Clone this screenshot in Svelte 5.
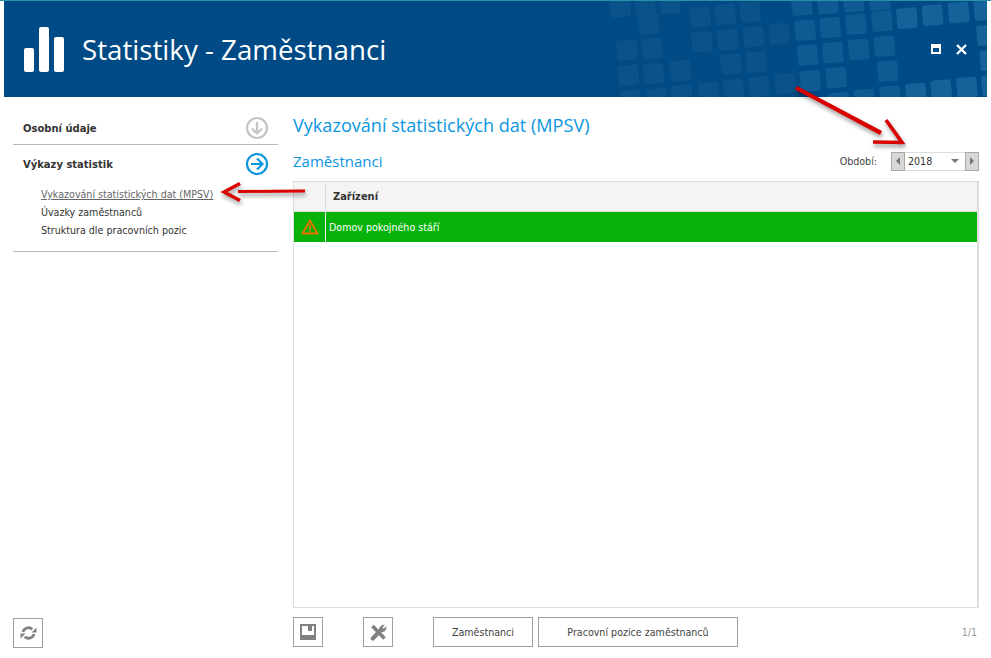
<script>
  const faint = [[115,40],[50,120],[125,115],[55,195],[130,190],[210,182],[270,20],[345,12],[420,5],[275,95],[352,88],[430,80],[507,70],[362,162],[438,155],[295,247],[370,238],[447,230],[525,220],[140,265],[215,255],[60,270],[30,-10],[105,-15],[180,-20]];
  const mid = [[585,60],[660,52],[737,42],[815,33],[592,135],[668,127],[745,118],[823,108],[600,212],[678,202],[832,183],[575,-15],[652,-20],[730,-25],[808,-30],[685,278],[762,268],[840,258]];
  const bright = [[890,24],[967,15],[1045,7],[1122,0],[1130,75],[1140,150],[917,250],[993,240],[1070,232],[1145,225]];
  const tile = (l) => l.map(([x, y]) => ({ x: x / 3 + 600 - 4, y: y / 3 - 1 }));
  const groups = [
    { cls: 'faint', items: tile(faint) },
    { cls: 'mid', items: tile(mid) },
    { cls: 'bright', items: tile(bright) }
  ];
</script>

<div class="page">
  <header class="head">
    <svg class="pattern" width="983" height="96" viewBox="0 0 983 96" aria-hidden="true">
      {#each groups as g}
        {#each g.items as t}
          <rect class={g.cls} x={t.x} y={t.y} width="20.5" height="20.5" rx="2.5" transform="rotate(-5 {t.x + 10} {t.y + 10})" />
        {/each}
      {/each}
    </svg>
    <svg class="logo" width="40" height="45" viewBox="0 0 40 45" aria-hidden="true">
      <rect x="0" y="21" width="10" height="24" rx="2" />
      <rect x="15" y="0" width="10" height="45" rx="2" />
      <rect x="30" y="10" width="10" height="35" rx="2" />
    </svg>
    <h1>Statistiky - Zaměstnanci</h1>
    <div class="winbtns">
      <svg width="10" height="10" viewBox="0 0 10 10" aria-hidden="true"><path fill-rule="evenodd" d="M0 0H10V10H0ZM2 4V8H8V4Z" /></svg>
      <svg width="11" height="11" viewBox="0 0 11 11" aria-hidden="true"><path d="M1 1L10 10M10 1L1 10" stroke="#fff" stroke-width="2.4" /></svg>
    </div>
  </header>

  <div class="body">
    <aside class="side">
      <div class="sect first">
        <span class="sect-title">Osobní údaje</span>
        <svg class="circ" width="24" height="24" viewBox="0 0 24 24" aria-hidden="true">
          <circle cx="12" cy="12" r="10" fill="none" stroke="#c4c4c4" stroke-width="2.2" />
          <path d="M12 6V17M7 12.500L12 17.500L17 12.500" fill="none" stroke="#c4c4c4" stroke-width="2.200" />
        </svg>
      </div>
      <div class="sect second">
        <span class="sect-title">Výkazy statistik</span>
        <svg class="circ" width="24" height="24" viewBox="0 0 24 24" aria-hidden="true">
          <circle cx="12" cy="12" r="10" fill="none" stroke="#0b96e0" stroke-width="2.2" />
          <path d="M6 12H17.500M12 6.500L17.500 12L12 17.500" fill="none" stroke="#0b96e0" stroke-width="2.200" />
        </svg>
      </div>
      <ul class="links">
        <li class="active">Vykazování statistických dat (MPSV)</li>
        <li>Úvazky zaměstnanců</li>
        <li>Struktura dle pracovních pozic</li>
      </ul>
    </aside>

    <main class="main">
      <h2>Vykazování statistických dat (MPSV)</h2>
      <div class="subrow">
        <h3>Zaměstnanci</h3>
        <div class="period">
          <span class="plabel">Období:</span>
          <span class="step"><i class="tri left"></i></span>
          <span class="year">2018<i class="tri down"></i></span>
          <span class="step"><i class="tri right"></i></span>
        </div>
      </div>
      <div class="table">
        <div class="thead">
          <div class="c0"></div>
          <div class="c1">Zařízení</div>
        </div>
        <div class="trow">
          <div class="c0">
            <svg width="18" height="16" viewBox="0 0 18 16" aria-hidden="true">
              <path d="M9 1.500L16.500 14.500H1.500Z" fill="none" stroke="#f07000" stroke-width="1.800" stroke-linejoin="round" />
              <path d="M9 5.500V10.500M9 11.500V13" stroke="#f07000" stroke-width="1.800" />
            </svg>
          </div>
          <div class="c1">Domov pokojného stáří</div>
        </div>
      </div>
    </main>
  </div>

  <footer class="foot">
    <div class="foot-left">
      <button class="icon" aria-label="Obnovit">
        <svg width="17" height="16" viewBox="0 0 17 16" aria-hidden="true">
          <path d="M3 7A5.700 5.700 0 0 1 12.300 4.200" fill="none" stroke="#808080" stroke-width="2.800" />
          <path d="M14 9A5.700 5.700 0 0 1 4.700 11.800" fill="none" stroke="#808080" stroke-width="2.800" />
          <path d="M16.500 2.500V7.500H11.500Z M.5 13.500V8.500H5.500Z" fill="#808080" />
        </svg>
      </button>
    </div>
    <div class="foot-main">
      <button class="icon save" aria-label="Uložit">
        <svg width="16" height="16" viewBox="0 0 16 16" aria-hidden="true">
          <path fill="#808080" fill-rule="evenodd" d="M0 0H16V16H0ZM2 2V11H14V2H12V7H8V2Z" />
        </svg>
      </button>
      <button class="icon tools" aria-label="Nástroje">
        <svg width="17" height="17" viewBox="0 0 17 17" aria-hidden="true">
          <path d="M2.500 2L14.500 14.500" stroke="#808080" stroke-width="3.600" fill="none" />
          <path d="M2.800 14.500L11.500 5.500" stroke="#808080" stroke-width="4.200" fill="none" stroke-linecap="round" />
          <path fill="#808080" d="M9 6.500C8.800 3 11.500 .3 15 .8L12.300 3.500L13.500 4.800L16.300 2.200C17 5.800 14.200 8.500 11 8Z" />
        </svg>
      </button>
      <button class="txt first-txt">Zaměstnanci</button>
      <button class="txt second-txt">Pracovní pozice zaměstnanců</button>
      <span class="pager">1/1</span>
    </div>
  </footer>

  <svg class="arrows" width="991" height="658" viewBox="0 0 991 658" aria-hidden="true">
    <g class="arrow">
      <path d="M305 189.500L305 192.500L238 193L238 190Z" />
      <path d="M240 183.500L224 192L240 200.500" fill="none" stroke="#d90000" stroke-width="3.400" />
      <path d="M797 86L882 131L880 135L795 89.500Z" />
      <path d="M886 120L902 142.500L873 142" fill="none" stroke="#d90000" stroke-width="3.600" />
    </g>
  </svg>
</div>

<style>
  :global(body) { margin: 0; background: #fff; }
  .page {
    position: relative;
    width: 991px;
    height: 658px;
    overflow: hidden;
    background: #fff;
    display: flex;
    flex-direction: column;
    font-family: "DejaVu Sans", sans-serif;
    font-stretch: condensed;
    font-size: 10.600px;
    color: #333;
    box-shadow: inset 0 1px 0 #2a8fa8;
  }
  .head {
    position: relative;
    margin: 1px 4px 0;
    height: 96px;
    flex: none;
    background: #004a85;
    display: flex;
    align-items: center;
    overflow: hidden;
  }
  .pattern { position: absolute; left: 0; top: 0; }
  .faint { fill: #0a5289; }
  .mid { fill: #0f5a92; }
  .bright { fill: #15629b; }
  .logo { position: relative; fill: #fff; margin-left: 20px; margin-top: 1px; }
  h1 {
    position: relative;
    margin: 0 0 0 18px;
    font: 400 27.700px "Open Sans", sans-serif;
    color: #fff;
  }
  .winbtns {
    position: relative;
    margin-left: auto;
    margin-right: 20px;
    display: flex;
    align-items: center;
    gap: 15px;
    fill: #fff;
  }
  .body { flex: 1; display: flex; min-height: 0; }
  .side { width: 265px; margin-left: 13px; flex: none; }
  .sect { display: flex; align-items: center; justify-content: space-between; padding: 0 9px 0 10px; }
  .first { height: 48px; box-sizing: border-box; padding-top: 15px; border-bottom: 1px solid #b9b9b9; }
  .second { height: 38px; }
  .sect-title { font-weight: 700; font-size: 11.100px; color: #333; }
  .links {
    list-style: none;
    margin: 0;
    padding: 2px 0 12px 28px;
    border-bottom: 1px solid #b9b9b9;
  }
  .links li { height: 18px; line-height: 18px; color: #333; }
  .links .active { color: #666; text-decoration: underline; }
  .main { flex: 1; margin-left: 15px; margin-right: 12px; display: flex; flex-direction: column; min-width: 0; }
  h2 {
    margin: 15px 0 0;
    font: 400 18.100px/27px "Open Sans", sans-serif;
    color: #0b96e0;
  }
  .subrow { display: flex; align-items: center; justify-content: space-between; height: 28px; margin-top: 8px; }
  h3 { margin: 0; font: 400 15px "Open Sans", sans-serif; color: #0b96e0; }
  .period { display: flex; align-items: center; }
  .plabel { margin-right: 14px; margin-left: -2px; color: #444; }
  .step {
    width: 14px; height: 19px; box-sizing: border-box;
    background: #d8d8d8; border: 1px solid #a8a8a8;
    display: flex; align-items: center; justify-content: center;
  }
  .year {
    width: 60px; height: 19px; box-sizing: border-box;
    border-top: 1px solid #ddd; border-bottom: 1px solid #ddd;
    padding-left: 3px; padding-right: 6px; color: #333;
    display: flex; align-items: center; justify-content: space-between;
  }
  .tri { display: block; width: 0; height: 0; border-style: solid; border-color: transparent; }
  .tri.left { border-width: 4px 4px 4px 0; border-right-color: #777; }
  .tri.right { border-width: 4px 0 4px 4px; border-left-color: #777; }
  .tri.down { border-width: 4px 4px 0 4px; border-top-color: #777; }
  .table {
    margin-top: 6px;
    flex: 1;
    border: 1px solid #ddd;
    border-right-width: 2px;
    margin-bottom: 9px;
  }
  .thead { display: flex; height: 29px; background: #f4f4f4; border-bottom: 1px solid #ddd; }
  .thead .c0 { border-right: 1px solid #ddd; }
  .thead .c1 { font-weight: 700; font-size: 11px; padding-left: 7px; line-height: 29px; color: #333; }
  .c0 { width: 31px; flex: none; display: flex; align-items: center; justify-content: center; }
  .trow { display: flex; height: 30px; background: #07b20a; color: #fff; }
  .trow .c0 { border-right: 1px solid #e8e8e8; }
  .trow .c1 { padding-left: 3px; line-height: 30px; }
  .foot { flex: none; height: 41px; display: flex; padding-bottom: 10px; box-sizing: border-box; }
  .foot-left { width: 278px; padding-left: 13px; flex: none; box-sizing: border-box; padding-top: 1px; }
  .foot-main { flex: 1; display: flex; margin-left: 15px; margin-right: 14px; align-items: flex-start; }
  button {
    font: inherit; font-stretch: condensed; color: #444; background: #fff;
    border: 1px solid #a0a0a0; border-radius: 0; padding: 0; height: 30px;
    box-sizing: border-box; display: flex; align-items: center; justify-content: center;
  }
  .icon { width: 30px; }
  .tools { margin-left: 40px; }
  .first-txt { width: 100px; margin-left: 40px; }
  .second-txt { width: 200px; margin-left: 5px; }
  .pager { margin-left: auto; color: #999; line-height: 30px; }
  .arrows { position: absolute; left: 0; top: 0; pointer-events: none; }
  .arrow { fill: #d90000; filter: drop-shadow(1px 3px 2px rgba(0,0,0,.4)); }
</style>
